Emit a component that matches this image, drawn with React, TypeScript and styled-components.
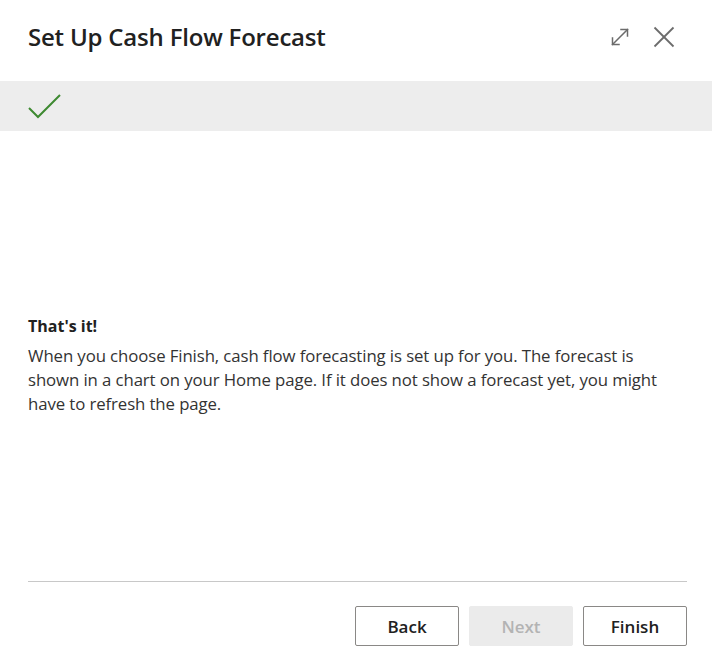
import React from 'react';
import styled, {createGlobalStyle} from 'styled-components';

const GlobalStyle = createGlobalStyle`
    html, body {
        margin: 0;
        padding: 0;
        background: #ffffff;
    }
    body {
        font-family: 'Segoe UI', 'Open Sans', 'Noto Sans', sans-serif;
        color: #212121;
    }
`;

const Dialog = styled.div`
    width: 712px;
    height: 669px;
    display: flex;
    flex-direction: column;
    background: #ffffff;
    box-sizing: border-box;
`;

const Header = styled.div`
    display: flex;
    align-items: center;
    justify-content: space-between;
    height: 81px;
    padding: 0 28px 8px 28px;
    box-sizing: border-box;
`;

const Title = styled.h1`
    margin: 0;
    font-size: 24px;
    font-weight: 600;
    letter-spacing: -0.2px;
    color: #212121;
`;

const HeaderActions = styled.div`
    display: flex;
    align-items: center;
    gap: 20px;
    margin-right: 8px;
`;

const IconButton = styled.button`
    display: flex;
    align-items: center;
    justify-content: center;
    width: 24px;
    height: 24px;
    padding: 0;
    border: none;
    background: none;
    cursor: pointer;
`;

const StepBand = styled.div`
    display: flex;
    align-items: center;
    height: 50px;
    padding: 0 28px;
    background: #ededed;
`;

const Body = styled.div`
    flex: 1;
    display: flex;
    flex-direction: column;
    padding: 183px 28px 0 28px;
`;

const Heading = styled.div`
    font-size: 16px;
    font-weight: 700;
    line-height: 24px;
    color: #212121;
    margin-bottom: 6px;
`;

const Paragraph = styled.p`
    margin: 0;
    width: 645px;
    font-size: 16.8px;
    line-height: 24px;
    letter-spacing: -0.1px;
    color: #333333;
`;

const Footer = styled.div`
    margin: 0 25px 0 28px;
    border-top: 1px solid #c8c8c8;
    padding: 24px 0 23px 0;
    display: flex;
    justify-content: flex-end;
    gap: 10px;
`;

const ActionButton = styled.button<{$disabled?: boolean}>`
    width: 104px;
    height: 40px;
    box-sizing: border-box;
    border-radius: 2px;
    border: 1px solid ${(p) => (p.$disabled ? '#ebebeb' : '#8a8886')};
    background: ${(p) => (p.$disabled ? '#ebebeb' : '#ffffff')};
    color: ${(p) => (p.$disabled ? '#b3b3b3' : '#212121')};
    font-family: inherit;
    font-size: 17px;
    font-weight: 600;
    cursor: ${(p) => (p.$disabled ? 'default' : 'pointer')};
`;

const ExpandIcon = () => (
    <svg width='22' height='22' viewBox='0 0 22 22' fill='none' stroke='#6b6b6b' strokeWidth='1.5' strokeLinecap='square'>
        <path d='M3.5 18.5 L18.5 3.5'/>
        <path d='M12 3.5 H18.5 V10'/>
        <path d='M3.5 12 V18.5 H10'/>
    </svg>
);

const CloseIcon = () => (
    <svg width='22' height='22' viewBox='0 0 22 22' fill='none' stroke='#6b6b6b' strokeWidth='1.8'>
        <path d='M1.5 1.5 L20.5 20.5'/>
        <path d='M20.5 1.5 L1.5 20.5'/>
    </svg>
);

const CheckIcon = () => (
    <svg width='34' height='26' viewBox='0 0 34 26' fill='none' stroke='#3e8a31' strokeWidth='2'>
        <path d='M1 15 L10 24 L32 2'/>
    </svg>
);

export default function App() {
    return (
        <>
            <GlobalStyle/>
            <Dialog>
                <Header>
                    <Title>Set Up Cash Flow Forecast</Title>
                    <HeaderActions>
                        <IconButton aria-label='Expand'><ExpandIcon/></IconButton>
                        <IconButton aria-label='Close'><CloseIcon/></IconButton>
                    </HeaderActions>
                </Header>
                <StepBand>
                    <CheckIcon/>
                </StepBand>
                <Body>
                    <Heading>That's it!</Heading>
                    <Paragraph>
                        When you choose Finish, cash flow forecasting is set up for you. The forecast is shown in a chart on your Home page. If it does not show a forecast yet, you might have to refresh the page.
                    </Paragraph>
                </Body>
                <Footer>
                    <ActionButton>Back</ActionButton>
                    <ActionButton $disabled>Next</ActionButton>
                    <ActionButton>Finish</ActionButton>
                </Footer>
            </Dialog>
        </>
    );
}
